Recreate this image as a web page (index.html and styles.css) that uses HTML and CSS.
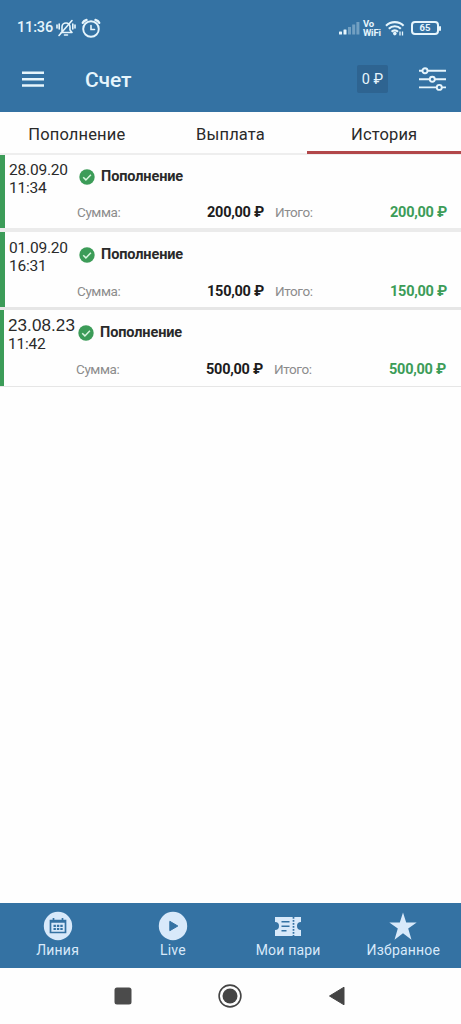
FILE: index.html
```html
<!DOCTYPE html>
<html lang="ru">
<head>
<meta charset="utf-8">
<title>Счет</title>
<link rel="stylesheet" href="styles.css">
</head>
<body>
<div class="screen">
  <header class="header">
    <div class="status">
      <span class="clock">11:36</span>
      <svg class="bell" width="20" height="20" viewBox="0 0 20 20" fill="none" stroke="#e6f5fc" stroke-width="1.6" stroke-linecap="round">
        <path d="M5 14.500h11M6 14V9a4 4 0 0 1 8 0v3l2 2.500M8.500 17h3M3 17.500 16 2.500M1 7v3M3.200 6v5M19 7v3M16.800 6v5"/>
      </svg>
      <svg class="alarm" width="20" height="20" viewBox="0 0 20 20" fill="none" stroke="#e6f5fc" stroke-linecap="round">
        <circle cx="10" cy="11" r="7.800" stroke-width="1.900"/>
        <path d="M10 7.500v4h3.500" stroke-width="1.600"/>
        <path d="M1.800 4.800Q2.800 2.500 5.500 2M18.200 4.800Q17.200 2.500 14.500 2" stroke-width="2.400"/>
      </svg>
      <svg class="signal" width="21" height="14" viewBox="0 0 21 14" fill="#e6f5fc">
        <rect x="0" y="10.500" width="3" height="3" rx=".5"/>
        <rect x="4.500" y="8.500" width="3" height="5" rx=".5"/>
        <g opacity=".35"><rect x="9" y="6" width="3" height="7.500"/><rect x="13.200" y="3.500" width="3" height="10"/><rect x="17.400" y="1" width="3" height="12.500"/></g>
      </svg>
      <span class="vowifi"><span>Vo</span><span>WiFi</span></span>
      <svg class="wifi" width="20" height="16" viewBox="0 0 20 16" fill="none" stroke="#e6f5fc" stroke-width="2.100">
        <path d="M1 5.700a12.500 12.500 0 0 1 17.600 0M3.800 8.800a8.500 8.500 0 0 1 12 0M6.600 11.700a4.500 4.500 0 0 1 6.400 0"/>
        <circle cx="9.800" cy="13.600" r="1.800" fill="#e6f5fc" stroke="none"/>
        <path d="M15 11.500v4M17.500 11.500v4" stroke-width="1.300"/>
      </svg>
      <span class="battery">65</span>
    </div>
    <div class="toolbar">
      <svg class="menu" width="22" height="16" viewBox="0 0 22 16" stroke="#e6f5fc" stroke-width="2.400"><path d="M0 1.800h22M0 8.300h22M0 14.500h22"/></svg>
      <h1 class="title">Счет</h1>
      <span class="balance">0 ₽</span>
      <svg class="filters" width="27" height="24" viewBox="0 0 27 24" stroke="#e6f5fc" stroke-width="1.900" fill="#3472a3">
        <path d="M0 3.800h27M0 12.200h27M0 20.400h27"/>
        <circle cx="6" cy="3.800" r="2.500"/><circle cx="13.300" cy="12.200" r="2.500"/><circle cx="20.300" cy="20.400" r="2.500"/>
      </svg>
    </div>
  </header>
  <nav class="tabs">
    <span class="tab">Пополнение</span>
    <span class="tab">Выплата</span>
    <span class="tab active">История</span>
  </nav>
  <main class="list">
    <article class="row first">
      <div class="when"><span>28.09.20</span><span>11:34</span></div>
      <div class="info">
        <div class="kind"><svg class="check" width="16" height="16" viewBox="0 0 16 16"><circle cx="8" cy="8" r="7.700" fill="#3c9c58"/><path d="m4.200 8.200 2.700 2.700 5-5.200" fill="none" stroke="#d9f5df" stroke-width="1.500"/></svg>Пополнение</div>
        <div class="sums"><span class="label">Сумма:</span><b class="sum">200,00 ₽</b><span class="label">Итого:</span><b class="total">200,00 ₽</b></div>
      </div>
    </article>
    <article class="row second">
      <div class="when"><span>01.09.20</span><span>16:31</span></div>
      <div class="info">
        <div class="kind"><svg class="check" width="16" height="16" viewBox="0 0 16 16"><circle cx="8" cy="8" r="7.700" fill="#3c9c58"/><path d="m4.200 8.200 2.700 2.700 5-5.200" fill="none" stroke="#d9f5df" stroke-width="1.500"/></svg>Пополнение</div>
        <div class="sums"><span class="label">Сумма:</span><b class="sum">150,00 ₽</b><span class="label">Итого:</span><b class="total">150,00 ₽</b></div>
      </div>
    </article>
    <article class="row third">
      <div class="when"><span class="wide">23.08.23</span><span>11:42</span></div>
      <div class="info">
        <div class="kind"><svg class="check" width="16" height="16" viewBox="0 0 16 16"><circle cx="8" cy="8" r="7.700" fill="#3c9c58"/><path d="m4.200 8.200 2.700 2.700 5-5.200" fill="none" stroke="#d9f5df" stroke-width="1.500"/></svg>Пополнение</div>
        <div class="sums"><span class="label">Сумма:</span><b class="sum">500,00 ₽</b><span class="label">Итого:</span><b class="total">500,00 ₽</b></div>
      </div>
    </article>
  </main>
  <nav class="bottom">
    <span class="item">
      <svg width="30" height="30" viewBox="0 0 30 30"><circle cx="15" cy="15" r="14.200" fill="#d8e9fa"/><path d="M7.500 9.500h15v12h-15zM7.500 11h15M10.500 7v3M19.500 7v3" fill="none" stroke="#3472a3" stroke-width="1.700"/><path d="M10.500 14.800h2.400M13.900 14.800h2.400M17.300 14.800h2.400M10.500 18h2.400M13.900 18h2.400M17.300 18h2.400" stroke="#3472a3" stroke-width="2.200"/></svg>
      <span>Линия</span>
    </span>
    <span class="item">
      <svg width="30" height="30" viewBox="0 0 30 30"><circle cx="15" cy="15" r="14.200" fill="#d8e9fa"/><path d="M11.800 10.300v9.400l8-4.700z" fill="#3472a3" stroke="#3472a3" stroke-linejoin="round"/></svg>
      <span>Live</span>
    </span>
    <span class="item">
      <svg width="30" height="30" viewBox="0 0 30 30"><path d="M2 6h26v5a4 4 0 0 0 0 8v6H2v-6a4 4 0 0 0 0-8z" fill="#d8e9fa"/><path d="M8.500 10.800h8M8.500 15.300h8M8.500 19.700h5" stroke="#3472a3" stroke-width="1.600"/><path d="M20.500 6v19" stroke="#3472a3" stroke-width="1.700" stroke-dasharray="1.800 1.200"/></svg>
      <span>Мои пари</span>
    </span>
    <span class="item">
      <svg width="30" height="30" viewBox="0 0 30 30"><path d="m15 1.500 3.200 9.900h10.500l-8.500 6.200 3.300 11.200L15 22.200l-8.500 6.600 3.300-11.200-8.500-6.200h10.500z" fill="#d8e9fa"/></svg>
      <span>Избранное</span>
    </span>
  </nav>
  <footer class="system">
    <svg width="18" height="18" viewBox="0 0 18 18"><rect x=".5" y=".5" width="17" height="17" rx="2.500" fill="#4b4b4b"/></svg>
    <svg width="24" height="24" viewBox="0 0 24 24"><circle cx="12" cy="12" r="10.900" fill="none" stroke="#444" stroke-width="1.600"/><circle cx="12" cy="12" r="7.500" fill="#444"/></svg>
    <svg width="18" height="20" viewBox="0 0 18 20"><path d="M1.500 10 16 1.200v17.600z" fill="#444" stroke="#444" stroke-linejoin="round"/></svg>
  </footer>
</div>
</body>
</html>
```
FILE: styles.css
```css
* { box-sizing: border-box; }
body { margin: 0; background: #fefefe; font-family: Roboto, "Noto Sans", sans-serif; color: #2a2a2a; }
.screen { width: 461px; height: 1024px; display: flex; flex-direction: column; overflow: hidden; }
svg { flex: none; display: block; }
.header { height: 112px; background: #3472a3; color: #e6f5fc; flex: none; }
.status { height: 54px; display: flex; align-items: center; padding: 1px 22px 0 17px; }
.clock { font-size: 14.5px; font-weight: 500; letter-spacing: -.15px; width: 39px; white-space: nowrap; }
.alarm { margin-left: 5px; }
.signal { margin-left: auto; }
.vowifi { display: flex; flex-direction: column; font-size: 9.5px; line-height: 9px; font-weight: 700; width: 18px; margin: 0 4px 0 3px; letter-spacing: -.2px; }
.battery { width: 28px; height: 14px; border: 2px solid #e6f5fc; border-radius: 4px; margin-left: 6px; font-size: 9.5px; line-height: 10px; font-weight: 700; text-align: center; position: relative; }
.battery::after { content: ""; position: absolute; right: -4px; top: 3px; width: 2px; height: 5px; background: #e6f5fc; border-radius: 1px; }
.toolbar { height: 50px; display: flex; align-items: center; padding: 0 15px 0 22px; }
.title { margin: 0 auto 0 41px; padding-top: 2px; font-size: 21px; font-weight: 500; letter-spacing: -.1px; }
.balance { width: 31px; height: 28px; line-height: 29px; background: #2e6491; text-align: center; font-size: 14.5px; margin-right: 31px; border-radius: 2px; white-space: nowrap; }
.tabs { height: 43px; flex: none; display: grid; grid-template-columns: 1fr 1fr 1fr; border-bottom: 2px solid #eee; }
.tab { text-align: center; font-size: 16.5px; line-height: 45px; height: 42px; letter-spacing: .15px; }
.active { border-bottom: 3px solid #b2474a; }
.list { flex: 1; }
.row { height: 75px; display: flex; border-left: 5px solid #3c9c58; }
.row.first { height: 73px; }
.row + .row { margin-top: 4px; box-shadow: 0 -4px #ebebeb; }
.row.second { box-shadow: -5px -4px #ebebeb, 0 -4px #ebebeb; }
.row.third { height: 76px; margin-top: 3px; border-left-width: 4px; box-shadow: 0 -3px #e6e6e6, 0 1px #e6e6e6; }
.when { width: 72px; padding: 6px 0 0 4px; display: flex; flex-direction: column; font-size: 15.5px; line-height: 18px; letter-spacing: -.2px; white-space: nowrap; }
.wide { font-family: "Liberation Sans", sans-serif; font-size: 17px; letter-spacing: .1px; }
.info { flex: 1; padding-top: 13px; }
.kind { display: flex; align-items: center; height: 17px; gap: 6px; font-size: 14.5px; font-weight: 700; letter-spacing: -.12px; padding-left: 2px; }
.sums { display: grid; grid-template-columns: 60px 127px 60px 1fr; align-items: center; margin-top: 18px; padding-right: 14px; height: 18px; font-size: 14.5px; letter-spacing: -.25px; white-space: nowrap; }
.row + .row .sums { margin-top: 19px; }
.third .when, .second .when { padding-top: 7px; }
.second .info, .third .info { padding-top: 14px; }
.row.third .sums { grid-template-columns: 61px 126px 60px 1fr; padding-right: 15px; }
.label { color: #8c8c8c; font-size: 13.5px; letter-spacing: -.4px; }
.sum { text-align: right; color: #1c1c1c; }
.sum + .label { padding-left: 11px; }
.total { color: #3c9c58; text-align: right; }
.bottom { height: 65px; flex: none; background: #3472a3; display: grid; grid-template-columns: repeat(4, 1fr); color: #d8e9fa; }
.item { display: flex; flex-direction: column; align-items: center; padding-top: 8px; font-size: 14px; line-height: 19px; letter-spacing: .2px; }
.system { height: 56px; flex: none; display: flex; align-items: center; justify-content: center; gap: 86px; padding-right: 2px; }
```
